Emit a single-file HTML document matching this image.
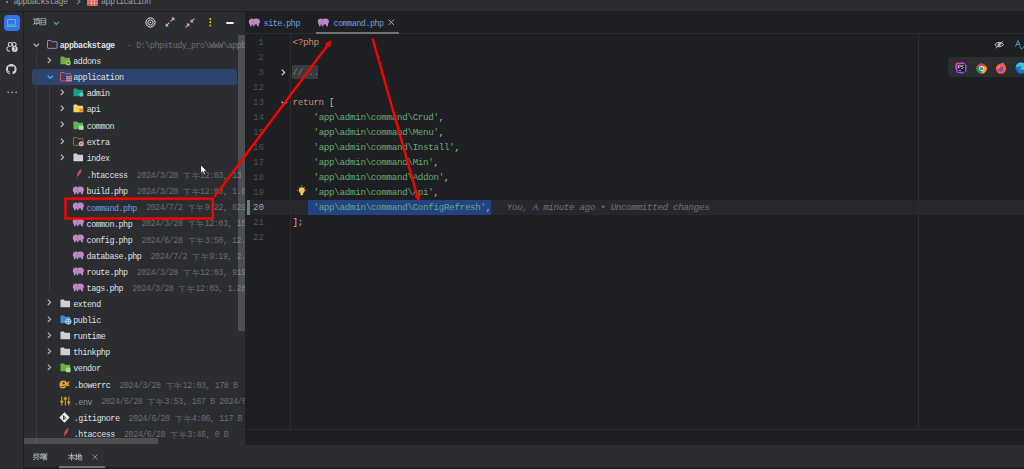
<!DOCTYPE html>
<html><head><meta charset="utf-8"><title>PhpStorm</title>
<style>
*{margin:0;padding:0;box-sizing:border-box}
html,body{width:1024px;height:469px;overflow:hidden;background:#1e1f22}
body{position:relative;font-family:"Liberation Mono",monospace;}
.a{position:absolute}
.t{position:absolute;white-space:pre;font-family:"Liberation Mono",monospace;line-height:1}
svg{overflow:visible}
</style></head><body>

<div class="a" style="left:0;top:0;width:1024px;height:11px;background:#2b2d30"></div>
<div class="a" style="left:0;top:11px;width:1024px;height:1px;background:#1e1f22"></div>
<div class="a" style="left:6px;top:1px;width:2px;height:2px;border-radius:1px;background:#4fc1a8"></div>
<div class="t" style="left:13.5px;top:-1.8px;font-size:8.4px;letter-spacing:-0.52px;color:#9ea2a9">appbackstage</div>
<svg class="a" style="left:76px;top:-1px" width="5" height="6"><path d="M1 0L4 2.5L1 5" fill="none" stroke="#3d8bd4" stroke-width="1.2"/></svg>
<svg class="a" style="left:87px;top:-3px" width="11" height="9"><rect x="0" y="0" width="11" height="9" fill="#e05252"/><path d="M4.5 3V9M7.5 3V9M0 3H11M0 6H11" stroke="#f3b3b3" stroke-width="0.8"/></svg>
<div class="t" style="left:101px;top:-1.8px;font-size:8.4px;letter-spacing:-0.52px;color:#9ea2a9">application</div>
<div class="a" style="left:0;top:12px;width:23px;height:433px;background:#2b2d30"></div>
<div class="a" style="left:23px;top:12px;width:1px;height:433px;background:#1e1f22"></div>
<div class="a" style="left:3.5px;top:15px;width:16.3px;height:16.3px;border-radius:4px;background:#3574f0"></div>
<svg class="a" style="left:5px;top:17px" width="13" height="12"><path d="M2.5 2.5H10.5V8H2.5ZM1.2 9.3H11.8" fill="none" stroke="#53c7a3" stroke-width="1"/></svg>
<svg class="a" style="left:5.6px;top:41.6px" width="12" height="10"><circle cx="4.2" cy="2.4" r="1.9" fill="none" stroke="#d4d6da" stroke-width="1.1"/><circle cx="8.2" cy="2.4" r="1.9" fill="none" stroke="#d4d6da" stroke-width="1.1"/><path d="M2.6 4.4Q0.5 5.2 0.8 7.4Q1.3 9.3 4 9.3" fill="none" stroke="#d4d6da" stroke-width="1.1"/><circle cx="8.7" cy="6.9" r="3" fill="#d4d6da"/><path d="M7.9 6.1Q8.1 5.2 8.9 5.3Q9.7 5.5 9.5 6.3Q9.3 6.9 8.7 7.2V7.8M8.7 8.5V8.9" fill="none" stroke="#2b2d30" stroke-width="0.75"/></svg>
<svg class="a" style="left:6.4px;top:64.4px" width="10.6" height="10.6" viewBox="0 0 16 16"><path fill="#d0d2d6" d="M8 0C3.58 0 0 3.58 0 8c0 3.54 2.29 6.53 5.47 7.59.4.07.55-.17.55-.38 0-.19-.01-.82-.01-1.49-2.01.37-2.53-.49-2.69-.94-.09-.23-.48-.94-.82-1.13-.28-.15-.68-.52-.01-.53.63-.01 1.08.58 1.23.82.72 1.21 1.87.87 2.33.66.07-.52.28-.87.51-1.07-1.78-.2-3.64-.89-3.640-3.95 0-.87.31-1.590.82-2.15-.08-.2-.36-1.02.08-2.12 0 0 .67-.21 2.2.82.64-.18 1.32-.27 2-.27.68 0 1.36.09 2 .27 1.53-1.040 2.2-.82 2.2-.82.44 1.1.16 1.92.08 2.12.51.56.82 1.27.82 2.15 0 3.07-1.870 3.75-3.65 3.95.29.25.54.73.54 1.48 0 1.07-.01 1.93-.01 2.2 0 .21.15.46.55.38A8.013 8.013 0 0016 8c0-4.42-3.58-8-8-8z"/></svg>
<svg class="a" style="left:6.5px;top:91px" width="11" height="3"><circle cx="1.2" cy="1.3" r="0.9" fill="#9a9da3"/><circle cx="5.2" cy="1.3" r="0.9" fill="#9a9da3"/><circle cx="9.2" cy="1.3" r="0.9" fill="#9a9da3"/></svg>
<div class="a" style="left:24px;top:12px;width:222px;height:433px;background:#2b2d30;overflow:hidden" id="proj">
<div class="a" style="left:8.6px;top:6.3px;display:flex;line-height:0"><svg width="7.2" height="7.2" viewBox="0 0 10 10" style="display:inline-block;vertical-align:-1px;"><path d="M0.4 1.6H3.8M2.1 1.6V7.6M0.4 8.6L3.8 7.4M4.4 0.9H9.8M6.8 0.9L6.3 2.4M5 2.6H9.2V7.4H5ZM7.1 3.6V6.6M6 7.6L4.4 9.6M8.2 7.6L9.8 9.6" fill="none" stroke="#c9ccd1" stroke-width="0.85" stroke-linecap="square"/></svg><span style="display:inline-block;width:0.6px"></span><svg width="7.2" height="7.2" viewBox="0 0 10 10" style="display:inline-block;vertical-align:-1px;"><path d="M2 0.8H8V9.4H2ZM2 3.6H8M2 6.5H8" fill="none" stroke="#c9ccd1" stroke-width="0.85" stroke-linecap="square"/></svg></div>
<svg class="a" style="left:29px;top:9.0px" width="7" height="5"><path d="M0.8 0.8L3.3 3.3L5.8 0.8" fill="none" stroke="#3fb6c6" stroke-width="1.2"/></svg>
<svg class="a" style="left:121px;top:5px" width="11" height="11"><circle cx="5.5" cy="5.5" r="4.6" fill="none" stroke="#eceef0" stroke-width="1"/><circle cx="5.5" cy="5.5" r="2.6" fill="none" stroke="#eceef0" stroke-width="0.9"/><path d="M4.8 4.5L6.6 5.5L4.8 6.5Z" fill="#eceef0"/></svg>
<svg class="a" style="left:141.3px;top:5.4px" width="10" height="10"><path d="M5.6 4.4L8.2 1.8M4.4 5.6L1.8 8.2" stroke="#e8a8cb" stroke-width="1.1"/><path d="M9.4 0.6V3.8L6.2 0.6ZM0.6 9.4V6.2L3.8 9.4Z" fill="#e8a8cb"/></svg>
<svg class="a" style="left:161.3px;top:5.6px" width="10" height="10"><path d="M9.4 0.6L6.8 3.2M0.6 9.4L3.2 6.8" stroke="#e8a8cb" stroke-width="1.1"/><path d="M5.6 4.4V1.2L8.8 4.4ZM4.4 5.6V8.8L1.2 5.6Z" fill="#e8a8cb"/></svg>
<svg class="a" style="left:184.5px;top:6.3px" width="3" height="9"><circle cx="1.3" cy="1.1" r="1" fill="#f0c419"/><circle cx="1.3" cy="4.3" r="1" fill="#f0c419"/><circle cx="1.3" cy="7.5" r="1" fill="#f0c419"/></svg>
<div class="a" style="left:201.7px;top:9.5px;width:8px;height:2px;border-radius:1px;background:#f2f3f5"></div>
<div class="a" style="left:8.200000000000003px;top:56.900000000000006px;width:204.60000000000002px;height:16.1px;border-radius:3px;background:#2e436e"></div>
<div class="a" style="left:12.399999999999999px;top:37.5px;width:1px;height:394.5px;background:#393b40"></div>
<div class="a" style="left:25.4px;top:70.5px;width:1px;height:210.5px;background:#393b40"></div>
<svg class="a" style="left:9px;top:30.500000000000004px" width="7" height="5"><path d="M0.7 0.7L3.3 3.4L5.9 0.7" fill="none" stroke="#aeb1b6" stroke-width="1.35"/></svg>
<svg class="a" style="left:22.5px;top:27.700000000000003px" width="11" height="9.3" viewBox="0 0 12 10"><path d="M0.5 1.2Q0.5 0.5 1.2 0.5H4.2L5.4 1.8H10.3Q11 1.8 11 2.5V8.3Q11 9 10.3 9H1.2Q0.5 9 0.5 8.3Z" fill="none" stroke="#b48ce0" stroke-width="1"/></svg>
<div class="t" style="left:35.8px;top:29.700000000000003px;font-size:8.4px;letter-spacing:-0.460px;color:#dfe1e5;font-weight:bold;">appbackstage</div>
<div class="t" style="left:103px;top:29.700000000000003px;font-size:8.4px;letter-spacing:-0.460px;color:#6b6f76;">- D:\phpstudy_pro\WWW\appbackstage</div>
<svg class="a" style="left:22.7px;top:44.68px" width="5" height="7"><path d="M0.8 0.6L3.6 3.3L0.8 6" fill="none" stroke="#b4b7bc" stroke-width="1.2"/></svg>
<svg class="a" style="left:35.5px;top:43.88px" width="11" height="9.3" viewBox="0 0 12 10"><path d="M0.5 1.2Q0.5 0.5 1.2 0.5H4.2L5.4 1.8H10.3Q11 1.8 11 2.5V8.3Q11 9 10.3 9H1.2Q0.5 9 0.5 8.3Z" fill="#73ad3f"/><rect x="6.5" y="5" width="5" height="5" rx="1" fill="#9ed36a"/><rect x="8" y="6.5" width="2" height="2" fill="#3e6b22"/></svg>
<div class="t" style="left:49.3px;top:45.88px;font-size:8.4px;letter-spacing:-0.460px;color:#dfe1e5;">addons</div>
<svg class="a" style="left:22.5px;top:62.86px" width="7" height="5"><path d="M0.7 0.7L3.3 3.4L5.9 0.7" fill="none" stroke="#5a9cf0" stroke-width="1.35"/></svg>
<svg class="a" style="left:35.8px;top:60.46px" width="13" height="10"><path d="M0.5 1.2Q0.5 0.5 1.2 0.5H4.2L5.4 1.8H10.3Q11 1.8 11 2.5V8.3Q11 9 10.3 9H1.2Q0.5 9 0.5 8.3Z" fill="none" stroke="#e05555" stroke-width="1"/><rect x="5.6" y="3.6" width="6.4" height="6" fill="#2e436e"/><path d="M6 4.6H12M6 6.6H12M6 8.6H12M7.2 4V9.6M9.2 4V9.6M11.2 4V9.6" stroke="#f08a8a" stroke-width="0.9"/></svg>
<div class="t" style="left:49.3px;top:62.06px;font-size:8.4px;letter-spacing:-0.460px;color:#dfe1e5;">application</div>
<svg class="a" style="left:36.2px;top:77.04px" width="5" height="7"><path d="M0.8 0.6L3.6 3.3L0.8 6" fill="none" stroke="#b4b7bc" stroke-width="1.2"/></svg>
<svg class="a" style="left:49.2px;top:76.24000000000001px" width="11" height="9.3" viewBox="0 0 12 10"><path d="M0.5 1.2Q0.5 0.5 1.2 0.5H4.2L5.4 1.8H10.3Q11 1.8 11 2.5V8.3Q11 9 10.3 9H1.2Q0.5 9 0.5 8.3Z" fill="#1a9c8e"/><path d="M9 4.2L11.8 7L9 9.8L6.2 7Z" fill="#54d3c0"/></svg>
<div class="t" style="left:62.7px;top:78.24000000000001px;font-size:8.4px;letter-spacing:-0.460px;color:#dfe1e5;">admin</div>
<svg class="a" style="left:36.2px;top:93.22px" width="5" height="7"><path d="M0.8 0.6L3.6 3.3L0.8 6" fill="none" stroke="#b4b7bc" stroke-width="1.2"/></svg>
<svg class="a" style="left:49.2px;top:92.42px" width="11" height="9.3" viewBox="0 0 12 10"><path d="M0.5 1.2Q0.5 0.5 1.2 0.5H4.2L5.4 1.8H10.3Q11 1.8 11 2.5V8.3Q11 9 10.3 9H1.2Q0.5 9 0.5 8.3Z" fill="#f4d35e"/><path d="M7 5L11.5 8.5M11.5 5L7 8.5" stroke="#e07a2e" stroke-width="1.4"/></svg>
<div class="t" style="left:62.7px;top:94.42px;font-size:8.4px;letter-spacing:-0.460px;color:#dfe1e5;">api</div>
<svg class="a" style="left:36.2px;top:109.4px" width="5" height="7"><path d="M0.8 0.6L3.6 3.3L0.8 6" fill="none" stroke="#b4b7bc" stroke-width="1.2"/></svg>
<svg class="a" style="left:49.2px;top:108.60000000000001px" width="11" height="9.3" viewBox="0 0 12 10"><path d="M0.5 1.2Q0.5 0.5 1.2 0.5H4.2L5.4 1.8H10.3Q11 1.8 11 2.5V8.3Q11 9 10.3 9H1.2Q0.5 9 0.5 8.3Z" fill="#5fb15c"/><rect x="6.5" y="5" width="5" height="4.5" fill="#b5e0a8"/></svg>
<div class="t" style="left:62.7px;top:110.60000000000001px;font-size:8.4px;letter-spacing:-0.460px;color:#dfe1e5;">common</div>
<svg class="a" style="left:36.2px;top:125.58px" width="5" height="7"><path d="M0.8 0.6L3.6 3.3L0.8 6" fill="none" stroke="#b4b7bc" stroke-width="1.2"/></svg>
<svg class="a" style="left:49.2px;top:124.78px" width="11" height="9.3" viewBox="0 0 12 10"><path d="M0.5 1.2Q0.5 0.5 1.2 0.5H4.2L5.4 1.8H10.3Q11 1.8 11 2.5V8.3Q11 9 10.3 9H1.2Q0.5 9 0.5 8.3Z" fill="none" stroke="#a0735a" stroke-width="1"/><circle cx="9" cy="7.3" r="2.8" fill="#c9b2a8"/><path d="M7.6 7.3H10.4" stroke="#5a4038" stroke-width="0.8"/></svg>
<div class="t" style="left:62.7px;top:126.78px;font-size:8.4px;letter-spacing:-0.460px;color:#dfe1e5;">extra</div>
<svg class="a" style="left:36.2px;top:141.76px" width="5" height="7"><path d="M0.8 0.6L3.6 3.3L0.8 6" fill="none" stroke="#b4b7bc" stroke-width="1.2"/></svg>
<svg class="a" style="left:49.2px;top:140.95999999999998px" width="11" height="9.3" viewBox="0 0 12 10"><path d="M0.5 1.2Q0.5 0.5 1.2 0.5H4.2L5.4 1.8H10.3Q11 1.8 11 2.5V8.3Q11 9 10.3 9H1.2Q0.5 9 0.5 8.3Z" fill="#ced0d6"/></svg>
<div class="t" style="left:62.7px;top:142.95999999999998px;font-size:8.4px;letter-spacing:-0.460px;color:#dfe1e5;">index</div>
<svg class="a" style="left:51px;top:156.33999999999997px" width="7" height="12"><path d="M6.3 0.4Q7.2 4.4 2.4 9Q0.9 5 6.3 0.4Z" fill="#cf4d63"/><path d="M2.4 9L1.6 11.2M5.6 2L3 7.6" fill="none" stroke="#a83a4e" stroke-width="0.6"/></svg>
<div class="t" style="left:62.599999999999994px;top:159.14px;font-size:8.4px;letter-spacing:-0.460px;color:#dfe1e5;">.htaccess  <span style="color:#6b6f76">2024/3/28 <svg width="7.8" height="7.8" viewBox="0 0 10 10" style="display:inline-block;vertical-align:-1px;margin:0 0.5px 0 0.5px;vertical-align:-1px;position:relative;top:0.8px"><path d="M1 1.8H9M5 1.8V9.6M5.6 4.6L7.8 6.2" fill="none" stroke="#6b6f76" stroke-width="0.8" stroke-linecap="square"/></svg><svg width="7.8" height="7.8" viewBox="0 0 10 10" style="display:inline-block;vertical-align:-1px;margin:0 0.5px 0 0.5px;vertical-align:-1px;position:relative;top:0.8px"><path d="M3.2 0.4L1.6 3.4M2.6 2.8H8.6M0.6 5.8H9.4M5 2.8V9.8" fill="none" stroke="#6b6f76" stroke-width="0.8" stroke-linecap="square"/></svg>12:03, 13 B</span></div>
<svg class="a" style="left:47.900000000000006px;top:173.82px" width="12" height="9"><path d="M1.2 5.6Q0 2.4 2.2 0.9Q4 -0.1 5.6 1.1Q6.8 0.3 8.8 0.5Q11.8 0.9 12 3.6Q12 5 11 5.8V8.3H9.2V6.6H6.4V8.3H4.8V6.6H3.6V8.3H1.9V6.2Z" fill="#bf88c6"/><path d="M5.7 1.2Q4.6 3.4 5.8 5.8" fill="none" stroke="#9a679f" stroke-width="0.55"/></svg>
<div class="t" style="left:62.599999999999994px;top:175.32px;font-size:8.4px;letter-spacing:-0.460px;color:#dfe1e5;">build.php  <span style="color:#6b6f76">2024/3/28 <svg width="7.8" height="7.8" viewBox="0 0 10 10" style="display:inline-block;vertical-align:-1px;margin:0 0.5px 0 0.5px;vertical-align:-1px;position:relative;top:0.8px"><path d="M1 1.8H9M5 1.8V9.6M5.6 4.6L7.8 6.2" fill="none" stroke="#6b6f76" stroke-width="0.8" stroke-linecap="square"/></svg><svg width="7.8" height="7.8" viewBox="0 0 10 10" style="display:inline-block;vertical-align:-1px;margin:0 0.5px 0 0.5px;vertical-align:-1px;position:relative;top:0.8px"><path d="M3.2 0.4L1.6 3.4M2.6 2.8H8.6M0.6 5.8H9.4M5 2.8V9.8" fill="none" stroke="#6b6f76" stroke-width="0.8" stroke-linecap="square"/></svg>12:03, 1.09 kB</span></div>
<svg class="a" style="left:47.900000000000006px;top:190.0px" width="12" height="9"><path d="M1.2 5.6Q0 2.4 2.2 0.9Q4 -0.1 5.6 1.1Q6.8 0.3 8.8 0.5Q11.8 0.9 12 3.6Q12 5 11 5.8V8.3H9.2V6.6H6.4V8.3H4.8V6.6H3.6V8.3H1.9V6.2Z" fill="#bf88c6"/><path d="M5.7 1.2Q4.6 3.4 5.8 5.8" fill="none" stroke="#9a679f" stroke-width="0.55"/></svg>
<div class="t" style="left:62.599999999999994px;top:191.5px;font-size:8.4px;letter-spacing:-0.460px;color:#6e9fe0;">command.php  <span style="color:#6b6f76">2024/7/2 <svg width="7.8" height="7.8" viewBox="0 0 10 10" style="display:inline-block;vertical-align:-1px;margin:0 0.5px 0 0.5px;vertical-align:-1px;position:relative;top:0.8px"><path d="M1 1.8H9M5 1.8V9.6M5.6 4.6L7.8 6.2" fill="none" stroke="#6b6f76" stroke-width="0.8" stroke-linecap="square"/></svg><svg width="7.8" height="7.8" viewBox="0 0 10 10" style="display:inline-block;vertical-align:-1px;margin:0 0.5px 0 0.5px;vertical-align:-1px;position:relative;top:0.8px"><path d="M3.2 0.4L1.6 3.4M2.6 2.8H8.6M0.6 5.8H9.4M5 2.8V9.8" fill="none" stroke="#6b6f76" stroke-width="0.8" stroke-linecap="square"/></svg>9:22, 829 B</span></div>
<svg class="a" style="left:47.900000000000006px;top:206.18px" width="12" height="9"><path d="M1.2 5.6Q0 2.4 2.2 0.9Q4 -0.1 5.6 1.1Q6.8 0.3 8.8 0.5Q11.8 0.9 12 3.6Q12 5 11 5.8V8.3H9.2V6.6H6.4V8.3H4.8V6.6H3.6V8.3H1.9V6.2Z" fill="#bf88c6"/><path d="M5.7 1.2Q4.6 3.4 5.8 5.8" fill="none" stroke="#9a679f" stroke-width="0.55"/></svg>
<div class="t" style="left:62.599999999999994px;top:207.68px;font-size:8.4px;letter-spacing:-0.460px;color:#dfe1e5;">common.php  <span style="color:#6b6f76">2024/3/28 <svg width="7.8" height="7.8" viewBox="0 0 10 10" style="display:inline-block;vertical-align:-1px;margin:0 0.5px 0 0.5px;vertical-align:-1px;position:relative;top:0.8px"><path d="M1 1.8H9M5 1.8V9.6M5.6 4.6L7.8 6.2" fill="none" stroke="#6b6f76" stroke-width="0.8" stroke-linecap="square"/></svg><svg width="7.8" height="7.8" viewBox="0 0 10 10" style="display:inline-block;vertical-align:-1px;margin:0 0.5px 0 0.5px;vertical-align:-1px;position:relative;top:0.8px"><path d="M3.2 0.4L1.6 3.4M2.6 2.8H8.6M0.6 5.8H9.4M5 2.8V9.8" fill="none" stroke="#6b6f76" stroke-width="0.8" stroke-linecap="square"/></svg>12:03, 15.31 kB</span></div>
<svg class="a" style="left:47.900000000000006px;top:222.36px" width="12" height="9"><path d="M1.2 5.6Q0 2.4 2.2 0.9Q4 -0.1 5.6 1.1Q6.8 0.3 8.8 0.5Q11.8 0.9 12 3.6Q12 5 11 5.8V8.3H9.2V6.6H6.4V8.3H4.8V6.6H3.6V8.3H1.9V6.2Z" fill="#bf88c6"/><path d="M5.7 1.2Q4.6 3.4 5.8 5.8" fill="none" stroke="#9a679f" stroke-width="0.55"/></svg>
<div class="t" style="left:62.599999999999994px;top:223.86px;font-size:8.4px;letter-spacing:-0.460px;color:#dfe1e5;">config.php  <span style="color:#6b6f76">2024/6/28 <svg width="7.8" height="7.8" viewBox="0 0 10 10" style="display:inline-block;vertical-align:-1px;margin:0 0.5px 0 0.5px;vertical-align:-1px;position:relative;top:0.8px"><path d="M1 1.8H9M5 1.8V9.6M5.6 4.6L7.8 6.2" fill="none" stroke="#6b6f76" stroke-width="0.8" stroke-linecap="square"/></svg><svg width="7.8" height="7.8" viewBox="0 0 10 10" style="display:inline-block;vertical-align:-1px;margin:0 0.5px 0 0.5px;vertical-align:-1px;position:relative;top:0.8px"><path d="M3.2 0.4L1.6 3.4M2.6 2.8H8.6M0.6 5.8H9.4M5 2.8V9.8" fill="none" stroke="#6b6f76" stroke-width="0.8" stroke-linecap="square"/></svg>3:50, 12.4 kB</span></div>
<svg class="a" style="left:47.900000000000006px;top:238.54000000000002px" width="12" height="9"><path d="M1.2 5.6Q0 2.4 2.2 0.9Q4 -0.1 5.6 1.1Q6.8 0.3 8.8 0.5Q11.8 0.9 12 3.6Q12 5 11 5.8V8.3H9.2V6.6H6.4V8.3H4.8V6.6H3.6V8.3H1.9V6.2Z" fill="#bf88c6"/><path d="M5.7 1.2Q4.6 3.4 5.8 5.8" fill="none" stroke="#9a679f" stroke-width="0.55"/></svg>
<div class="t" style="left:62.599999999999994px;top:240.04000000000002px;font-size:8.4px;letter-spacing:-0.460px;color:#dfe1e5;">database.php  <span style="color:#6b6f76">2024/7/2 <svg width="7.8" height="7.8" viewBox="0 0 10 10" style="display:inline-block;vertical-align:-1px;margin:0 0.5px 0 0.5px;vertical-align:-1px;position:relative;top:0.8px"><path d="M1 1.8H9M5 1.8V9.6M5.6 4.6L7.8 6.2" fill="none" stroke="#6b6f76" stroke-width="0.8" stroke-linecap="square"/></svg><svg width="7.8" height="7.8" viewBox="0 0 10 10" style="display:inline-block;vertical-align:-1px;margin:0 0.5px 0 0.5px;vertical-align:-1px;position:relative;top:0.8px"><path d="M3.2 0.4L1.6 3.4M2.6 2.8H8.6M0.6 5.8H9.4M5 2.8V9.8" fill="none" stroke="#6b6f76" stroke-width="0.8" stroke-linecap="square"/></svg>9:19, 2.1 kB</span></div>
<svg class="a" style="left:47.900000000000006px;top:254.71999999999997px" width="12" height="9"><path d="M1.2 5.6Q0 2.4 2.2 0.9Q4 -0.1 5.6 1.1Q6.8 0.3 8.8 0.5Q11.8 0.9 12 3.6Q12 5 11 5.8V8.3H9.2V6.6H6.4V8.3H4.8V6.6H3.6V8.3H1.9V6.2Z" fill="#bf88c6"/><path d="M5.7 1.2Q4.6 3.4 5.8 5.8" fill="none" stroke="#9a679f" stroke-width="0.55"/></svg>
<div class="t" style="left:62.599999999999994px;top:256.21999999999997px;font-size:8.4px;letter-spacing:-0.460px;color:#dfe1e5;">route.php  <span style="color:#6b6f76">2024/3/28 <svg width="7.8" height="7.8" viewBox="0 0 10 10" style="display:inline-block;vertical-align:-1px;margin:0 0.5px 0 0.5px;vertical-align:-1px;position:relative;top:0.8px"><path d="M1 1.8H9M5 1.8V9.6M5.6 4.6L7.8 6.2" fill="none" stroke="#6b6f76" stroke-width="0.8" stroke-linecap="square"/></svg><svg width="7.8" height="7.8" viewBox="0 0 10 10" style="display:inline-block;vertical-align:-1px;margin:0 0.5px 0 0.5px;vertical-align:-1px;position:relative;top:0.8px"><path d="M3.2 0.4L1.6 3.4M2.6 2.8H8.6M0.6 5.8H9.4M5 2.8V9.8" fill="none" stroke="#6b6f76" stroke-width="0.8" stroke-linecap="square"/></svg>12:03, 919 B</span></div>
<svg class="a" style="left:47.900000000000006px;top:270.9px" width="12" height="9"><path d="M1.2 5.6Q0 2.4 2.2 0.9Q4 -0.1 5.6 1.1Q6.8 0.3 8.8 0.5Q11.8 0.9 12 3.6Q12 5 11 5.8V8.3H9.2V6.6H6.4V8.3H4.8V6.6H3.6V8.3H1.9V6.2Z" fill="#bf88c6"/><path d="M5.7 1.2Q4.6 3.4 5.8 5.8" fill="none" stroke="#9a679f" stroke-width="0.55"/></svg>
<div class="t" style="left:62.599999999999994px;top:272.4px;font-size:8.4px;letter-spacing:-0.460px;color:#dfe1e5;">tags.php  <span style="color:#6b6f76">2024/3/28 <svg width="7.8" height="7.8" viewBox="0 0 10 10" style="display:inline-block;vertical-align:-1px;margin:0 0.5px 0 0.5px;vertical-align:-1px;position:relative;top:0.8px"><path d="M1 1.8H9M5 1.8V9.6M5.6 4.6L7.8 6.2" fill="none" stroke="#6b6f76" stroke-width="0.8" stroke-linecap="square"/></svg><svg width="7.8" height="7.8" viewBox="0 0 10 10" style="display:inline-block;vertical-align:-1px;margin:0 0.5px 0 0.5px;vertical-align:-1px;position:relative;top:0.8px"><path d="M3.2 0.4L1.6 3.4M2.6 2.8H8.6M0.6 5.8H9.4M5 2.8V9.8" fill="none" stroke="#6b6f76" stroke-width="0.8" stroke-linecap="square"/></svg>12:03, 1.28 kB</span></div>
<svg class="a" style="left:22.7px;top:287.38px" width="5" height="7"><path d="M0.8 0.6L3.6 3.3L0.8 6" fill="none" stroke="#b4b7bc" stroke-width="1.2"/></svg>
<svg class="a" style="left:35.5px;top:286.58px" width="11" height="9.3" viewBox="0 0 12 10"><path d="M0.5 1.2Q0.5 0.5 1.2 0.5H4.2L5.4 1.8H10.3Q11 1.8 11 2.5V8.3Q11 9 10.3 9H1.2Q0.5 9 0.5 8.3Z" fill="#ced0d6"/></svg>
<div class="t" style="left:49.3px;top:288.58px;font-size:8.4px;letter-spacing:-0.460px;color:#dfe1e5;">extend</div>
<svg class="a" style="left:22.7px;top:303.56px" width="5" height="7"><path d="M0.8 0.6L3.6 3.3L0.8 6" fill="none" stroke="#b4b7bc" stroke-width="1.2"/></svg>
<svg class="a" style="left:35.5px;top:302.76px" width="11" height="9.3" viewBox="0 0 12 10"><path d="M0.5 1.2Q0.5 0.5 1.2 0.5H4.2L5.4 1.8H10.3Q11 1.8 11 2.5V8.3Q11 9 10.3 9H1.2Q0.5 9 0.5 8.3Z" fill="#3d8fd4"/><circle cx="9.2" cy="7" r="2.9" fill="#3d8fd4" stroke="#cfe6fb" stroke-width="0.9"/><path d="M6.4 7H12M9.2 4.2V9.8" stroke="#cfe6fb" stroke-width="0.7"/></svg>
<div class="t" style="left:49.3px;top:304.76px;font-size:8.4px;letter-spacing:-0.460px;color:#dfe1e5;">public</div>
<svg class="a" style="left:22.7px;top:319.74px" width="5" height="7"><path d="M0.8 0.6L3.6 3.3L0.8 6" fill="none" stroke="#b4b7bc" stroke-width="1.2"/></svg>
<svg class="a" style="left:35.5px;top:318.94px" width="11" height="9.3" viewBox="0 0 12 10"><path d="M0.5 1.2Q0.5 0.5 1.2 0.5H4.2L5.4 1.8H10.3Q11 1.8 11 2.5V8.3Q11 9 10.3 9H1.2Q0.5 9 0.5 8.3Z" fill="#ced0d6"/></svg>
<div class="t" style="left:49.3px;top:320.94px;font-size:8.4px;letter-spacing:-0.460px;color:#dfe1e5;">runtime</div>
<svg class="a" style="left:22.7px;top:335.92px" width="5" height="7"><path d="M0.8 0.6L3.6 3.3L0.8 6" fill="none" stroke="#b4b7bc" stroke-width="1.2"/></svg>
<svg class="a" style="left:35.5px;top:335.12px" width="11" height="9.3" viewBox="0 0 12 10"><path d="M0.5 1.2Q0.5 0.5 1.2 0.5H4.2L5.4 1.8H10.3Q11 1.8 11 2.5V8.3Q11 9 10.3 9H1.2Q0.5 9 0.5 8.3Z" fill="#ced0d6"/></svg>
<div class="t" style="left:49.3px;top:337.12px;font-size:8.4px;letter-spacing:-0.460px;color:#dfe1e5;">thinkphp</div>
<svg class="a" style="left:22.7px;top:352.1px" width="5" height="7"><path d="M0.8 0.6L3.6 3.3L0.8 6" fill="none" stroke="#b4b7bc" stroke-width="1.2"/></svg>
<svg class="a" style="left:35.5px;top:351.3px" width="11" height="9.3" viewBox="0 0 12 10"><path d="M0.5 1.2Q0.5 0.5 1.2 0.5H4.2L5.4 1.8H10.3Q11 1.8 11 2.5V8.3Q11 9 10.3 9H1.2Q0.5 9 0.5 8.3Z" fill="#62b543"/><rect x="6.5" y="5" width="5" height="5" fill="#a6dc8a"/></svg>
<div class="t" style="left:49.3px;top:353.3px;font-size:8.4px;letter-spacing:-0.460px;color:#dfe1e5;">vendor</div>
<svg class="a" style="left:35.4px;top:367.87999999999994px" width="11" height="9"><path d="M4.2 0.6Q7.6 0.4 7.6 3Q9.6 1 10.6 1.4Q10.2 3.4 8.6 4.2Q10.4 4.6 10.8 5.8Q9 6.4 7.6 5.6Q6.6 8.6 3.8 8.6Q0.4 8.4 0.4 4.6Q0.6 0.8 4.2 0.6Z" fill="#eda331"/><circle cx="4.6" cy="3.2" r="1.1" fill="#2b2d30"/><path d="M2 6.4Q4.6 7.2 6.6 5.2" fill="none" stroke="#2b2d30" stroke-width="0.7"/></svg>
<div class="t" style="left:49.8px;top:369.47999999999996px;font-size:8.4px;letter-spacing:-0.460px;color:#dfe1e5;">.bowerrc  <span style="color:#6b6f76">2024/3/28 <svg width="7.8" height="7.8" viewBox="0 0 10 10" style="display:inline-block;vertical-align:-1px;margin:0 0.5px 0 0.5px;vertical-align:-1px;position:relative;top:0.8px"><path d="M1 1.8H9M5 1.8V9.6M5.6 4.6L7.8 6.2" fill="none" stroke="#6b6f76" stroke-width="0.8" stroke-linecap="square"/></svg><svg width="7.8" height="7.8" viewBox="0 0 10 10" style="display:inline-block;vertical-align:-1px;margin:0 0.5px 0 0.5px;vertical-align:-1px;position:relative;top:0.8px"><path d="M3.2 0.4L1.6 3.4M2.6 2.8H8.6M0.6 5.8H9.4M5 2.8V9.8" fill="none" stroke="#6b6f76" stroke-width="0.8" stroke-linecap="square"/></svg>12:03, 178 B</span></div>
<svg class="a" style="left:35.8px;top:383.65999999999997px" width="11" height="10"><path d="M1.8 0.5V9.5M5.3 0.5V9.5M8.8 0.5V9.5" stroke="#e5a331" stroke-width="1"/><path d="M0.3 5.6H3.3M3.8 2.6H6.8M7.3 6.4H10.3" stroke="#e5a331" stroke-width="1.8"/></svg>
<div class="t" style="left:49.8px;top:385.65999999999997px;font-size:8.4px;letter-spacing:-0.460px;color:#8c8f94;">.env  <span style="color:#6b6f76">2024/6/28 <svg width="7.8" height="7.8" viewBox="0 0 10 10" style="display:inline-block;vertical-align:-1px;margin:0 0.5px 0 0.5px;vertical-align:-1px;position:relative;top:0.8px"><path d="M1 1.8H9M5 1.8V9.6M5.6 4.6L7.8 6.2" fill="none" stroke="#6b6f76" stroke-width="0.8" stroke-linecap="square"/></svg><svg width="7.8" height="7.8" viewBox="0 0 10 10" style="display:inline-block;vertical-align:-1px;margin:0 0.5px 0 0.5px;vertical-align:-1px;position:relative;top:0.8px"><path d="M3.2 0.4L1.6 3.4M2.6 2.8H8.6M0.6 5.8H9.4M5 2.8V9.8" fill="none" stroke="#6b6f76" stroke-width="0.8" stroke-linecap="square"/></svg>3:53, 167 B 2024/6/28</span></div>
<svg class="a" style="left:35.2px;top:399.64px" width="11" height="11"><path d="M5.5 0.3L10.7 5.5L5.5 10.7L0.3 5.5Z" fill="#eaeaec"/><path d="M4 3.4L7 6.4M4.6 3.8V8M4.6 5.6L6.6 7.2" stroke="#2b2d30" stroke-width="0.9" fill="none"/></svg>
<div class="t" style="left:49.8px;top:401.84px;font-size:8.4px;letter-spacing:-0.460px;color:#dfe1e5;">.gitignore  <span style="color:#6b6f76">2024/6/28 <svg width="7.8" height="7.8" viewBox="0 0 10 10" style="display:inline-block;vertical-align:-1px;margin:0 0.5px 0 0.5px;vertical-align:-1px;position:relative;top:0.8px"><path d="M1 1.8H9M5 1.8V9.6M5.6 4.6L7.8 6.2" fill="none" stroke="#6b6f76" stroke-width="0.8" stroke-linecap="square"/></svg><svg width="7.8" height="7.8" viewBox="0 0 10 10" style="display:inline-block;vertical-align:-1px;margin:0 0.5px 0 0.5px;vertical-align:-1px;position:relative;top:0.8px"><path d="M3.2 0.4L1.6 3.4M2.6 2.8H8.6M0.6 5.8H9.4M5 2.8V9.8" fill="none" stroke="#6b6f76" stroke-width="0.8" stroke-linecap="square"/></svg>4:06, 117 B</span></div>
<svg class="a" style="left:37.5px;top:415.21999999999997px" width="7" height="12"><path d="M6.3 0.4Q7.2 4.4 2.4 9Q0.9 5 6.3 0.4Z" fill="#cf4d63"/><path d="M2.4 9L1.6 11.2M5.6 2L3 7.6" fill="none" stroke="#a83a4e" stroke-width="0.6"/></svg>
<div class="t" style="left:49.8px;top:418.02px;font-size:8.4px;letter-spacing:-0.460px;color:#dfe1e5;">.htaccess  <span style="color:#6b6f76">2024/6/28 <svg width="7.8" height="7.8" viewBox="0 0 10 10" style="display:inline-block;vertical-align:-1px;margin:0 0.5px 0 0.5px;vertical-align:-1px;position:relative;top:0.8px"><path d="M1 1.8H9M5 1.8V9.6M5.6 4.6L7.8 6.2" fill="none" stroke="#6b6f76" stroke-width="0.8" stroke-linecap="square"/></svg><svg width="7.8" height="7.8" viewBox="0 0 10 10" style="display:inline-block;vertical-align:-1px;margin:0 0.5px 0 0.5px;vertical-align:-1px;position:relative;top:0.8px"><path d="M3.2 0.4L1.6 3.4M2.6 2.8H8.6M0.6 5.8H9.4M5 2.8V9.8" fill="none" stroke="#6b6f76" stroke-width="0.8" stroke-linecap="square"/></svg>3:46, 0 B</span></div>
<div class="a" style="left:214px;top:23px;width:7px;height:296px;background:rgba(255,255,255,0.165)"></div>
<div class="a" style="left:0px;top:425.6px;width:134.4px;height:6.5px;background:rgba(255,255,255,0.165)"></div>
</div>
<div class="a" style="left:245px;top:12px;width:779px;height:433px;background:#1e1f22;overflow:hidden">
<div class="a" style="left:0;top:21px;width:779px;height:1px;background:#2b2d30"></div>
<div class="a" style="left:70.5px;top:20px;width:83.5px;height:2px;background:#6f737a"></div>
<svg class="a" style="left:2.5999999999999943px;top:5.899999999999999px" width="12" height="9"><path d="M1.2 5.6Q0 2.4 2.2 0.9Q4 -0.1 5.6 1.1Q6.8 0.3 8.8 0.5Q11.8 0.9 12 3.6Q12 5 11 5.8V8.3H9.2V6.6H6.4V8.3H4.8V6.6H3.6V8.3H1.9V6.2Z" fill="#bf88c6"/><path d="M5.7 1.2Q4.6 3.4 5.8 5.8" fill="none" stroke="#9a679f" stroke-width="0.55"/></svg>
<div class="t" style="left:18.600000000000023px;top:7.899999999999999px;font-size:8.4px;letter-spacing:-0.48px;color:#6e9fe0">site.php</div>
<svg class="a" style="left:72.39999999999998px;top:5.899999999999999px" width="12" height="9"><path d="M1.2 5.6Q0 2.4 2.2 0.9Q4 -0.1 5.6 1.1Q6.8 0.3 8.8 0.5Q11.8 0.9 12 3.6Q12 5 11 5.8V8.3H9.2V6.6H6.4V8.3H4.8V6.6H3.6V8.3H1.9V6.2Z" fill="#bf88c6"/><path d="M5.7 1.2Q4.6 3.4 5.8 5.8" fill="none" stroke="#9a679f" stroke-width="0.55"/></svg>
<div class="t" style="left:88.60000000000002px;top:7.899999999999999px;font-size:8.4px;letter-spacing:-0.48px;color:#6e9fe0">command.php</div>
<svg class="a" style="left:143px;top:7.199999999999998px" width="7" height="7"><path d="M0.6 0.6L6 6M6 0.6L0.6 6" stroke="#a8abb0" stroke-width="1"/></svg>
<div class="a" style="left:0;top:188px;width:779px;height:15px;background:#26282e"></div>
<div class="a" style="left:45px;top:22px;width:1px;height:395px;background:#2b2d30"></div>
<div class="a" style="left:673px;top:22px;width:1px;height:395px;background:#2b2d30"></div>
<div class="a" style="left:0;top:417px;width:779px;height:1px;background:#2b2d30"></div>
<div class="a" style="left:2.1999999999999886px;top:188px;width:2.8px;height:15px;background:#549159"></div>
<div class="t" style="left:13.169999999999977px;top:26.299999999999997px;font-size:9.2px;color:#4b5059;width:6.23px">1</div>
<div class="t" style="left:13.169999999999977px;top:41.3px;font-size:9.2px;color:#4b5059;width:6.23px">2</div>
<div class="t" style="left:13.169999999999977px;top:56.3px;font-size:9.2px;color:#4b5059;width:6.23px">3</div>
<div class="t" style="left:7.939999999999976px;top:71.30000000000001px;font-size:9.2px;color:#4b5059;width:11.46px">12</div>
<div class="t" style="left:7.939999999999976px;top:86.30000000000001px;font-size:9.2px;color:#4b5059;width:11.46px">13</div>
<div class="t" style="left:7.939999999999976px;top:101.30000000000001px;font-size:9.2px;color:#4b5059;width:11.46px">14</div>
<div class="t" style="left:7.939999999999976px;top:116.30000000000001px;font-size:9.2px;color:#4b5059;width:11.46px">15</div>
<div class="t" style="left:7.939999999999976px;top:131.3px;font-size:9.2px;color:#4b5059;width:11.46px">16</div>
<div class="t" style="left:7.939999999999976px;top:146.3px;font-size:9.2px;color:#4b5059;width:11.46px">17</div>
<div class="t" style="left:7.939999999999976px;top:161.3px;font-size:9.2px;color:#4b5059;width:11.46px">18</div>
<div class="t" style="left:7.939999999999976px;top:176.3px;font-size:9.2px;color:#4b5059;width:11.46px">19</div>
<div class="t" style="left:7.939999999999976px;top:191.3px;font-size:9.2px;color:#a1a3ab;width:11.46px">20</div>
<div class="t" style="left:7.939999999999976px;top:206.3px;font-size:9.2px;color:#4b5059;width:11.46px">21</div>
<div class="t" style="left:7.939999999999976px;top:221.3px;font-size:9.2px;color:#4b5059;width:11.46px">22</div>
<svg class="a" style="left:36px;top:57px" width="5" height="7"><path d="M0.8 0.6L3.6 3.4L0.8 6.2" fill="none" stroke="#dfe1e5" stroke-width="1.2"/></svg>
<svg class="a" style="left:35.5px;top:88.5px" width="7" height="5"><path d="M0.7 0.7L3.3 3.4L5.9 0.7" fill="none" stroke="#c8cacf" stroke-width="1.2"/></svg>
<div class="a" style="left:47.19999999999999px;top:52.5px;width:25.80000000000001px;height:14.8px;border-radius:1px;background:#393b40"></div>
<div class="a" style="left:62.89999999999998px;top:188px;width:183.0px;height:15px;background:#214283"></div>
<svg class="a" style="left:51px;top:172.5px" width="12" height="12"><circle cx="5.8" cy="5.2" r="2.9" fill="#f2c94c"/><rect x="4.5" y="7.6" width="2.6" height="2.6" fill="#f2c94c"/><path d="M5.8 0.3V1.4M1.2 5.2H2.2M9.4 5.2H10.4M2.6 2L3.3 2.7M9 2L8.3 2.7" stroke="#f2c94c" stroke-width="0.9"/></svg>
<div class="t" style="left:47.5px;top:26.299999999999997px;font-size:9.2px;letter-spacing:-0.28999999999999915px"><span style="color:#cf8e6d">&lt;?php</span></div>
<div class="t" style="left:47.5px;top:56.3px;font-size:9.2px;letter-spacing:-0.28999999999999915px"><span style="color:#7a7e85">// ..</span></div>
<div class="t" style="left:47.5px;top:86.30000000000001px;font-size:9.2px;letter-spacing:-0.28999999999999915px"><span style="color:#cf8e6d">return</span> <span style="color:#d5b778">[</span></div>
<div class="t" style="left:47.5px;top:101.30000000000001px;font-size:9.2px;letter-spacing:-0.28999999999999915px">    <span style="color:#6aab73">'app\admin\command\Crud'</span><span style="color:#bcbec4">,</span></div>
<div class="t" style="left:47.5px;top:116.30000000000001px;font-size:9.2px;letter-spacing:-0.28999999999999915px">    <span style="color:#6aab73">'app\admin\command\Menu'</span><span style="color:#bcbec4">,</span></div>
<div class="t" style="left:47.5px;top:131.3px;font-size:9.2px;letter-spacing:-0.28999999999999915px">    <span style="color:#6aab73">'app\admin\command\Install'</span><span style="color:#bcbec4">,</span></div>
<div class="t" style="left:47.5px;top:146.3px;font-size:9.2px;letter-spacing:-0.28999999999999915px">    <span style="color:#6aab73">'app\admin\command\Min'</span><span style="color:#bcbec4">,</span></div>
<div class="t" style="left:47.5px;top:161.3px;font-size:9.2px;letter-spacing:-0.28999999999999915px">    <span style="color:#6aab73">'app\admin\command\Addon'</span><span style="color:#bcbec4">,</span></div>
<div class="t" style="left:47.5px;top:176.3px;font-size:9.2px;letter-spacing:-0.28999999999999915px">    <span style="color:#6aab73">'app\admin\command\Api'</span><span style="color:#bcbec4">,</span></div>
<div class="t" style="left:47.5px;top:191.3px;font-size:9.2px;letter-spacing:-0.28999999999999915px">    <span style="color:#6aab73">'app\admin\command\ConfigRefresh'</span><span style="color:#bcbec4">,</span></div>
<div class="t" style="left:47.5px;top:206.3px;font-size:9.2px;letter-spacing:-0.28999999999999915px"><span style="color:#d5b778">]</span><span style="color:#bcbec4">;</span></div>
<div class="t" style="left:261.8px;top:191.3px;font-size:9.2px;font-style:italic;color:#6f737a;letter-spacing:-0.3199999999999994px">You, A minute ago • Uncommitted changes</div>
<svg class="a" style="left:749px;top:28.5px" width="11" height="8"><path d="M0.8 3.6Q5 -1 9.6 3.6Q5 8.2 0.8 3.6Z" fill="none" stroke="#c2c4c8" stroke-width="1"/><circle cx="5.2" cy="3.6" r="1.5" fill="#c2c4c8"/><path d="M1.6 7L8.8 0.4" stroke="#c2c4c8" stroke-width="1"/></svg>
<svg class="a" style="left:769.8px;top:27.5px" width="12" height="10"><path d="M0.5 6.5L3 0.6L5.5 6.5M1.4 4.5H4.6M4.4 6.8L6.6 9.2L11 4" fill="none" stroke="#39a9c2" stroke-width="1"/></svg>
<div class="a" style="left:703.2px;top:45.1px;width:90px;height:20.4px;border-radius:4px;background:#2b2d30"></div>
<svg class="a" style="left:709.8px;top:49.8px" width="12" height="12"><defs><linearGradient id="psg" x1="0" y1="0" x2="1" y2="1"><stop offset="0" stop-color="#ff318c"/><stop offset="0.5" stop-color="#b345f1"/><stop offset="1" stop-color="#765af8"/></linearGradient></defs><path d="M0.6 0.8L8.8 0.2L11.6 3.6L11.2 9.4L6.6 11.8L1.6 10.6L0.2 5Z" fill="url(#psg)"/><rect x="2.6" y="2.4" width="7.2" height="7.2" fill="#000"/><path d="M3.6 6.4V3.4H4.9Q5.8 3.4 5.8 4.3Q5.8 5.2 4.9 5.2H3.6M8.4 3.5H7.2Q6.5 3.5 6.5 4.2Q6.5 4.8 7.2 4.8Q8.4 4.8 8.4 5.6Q8.4 6.4 7.4 6.4H6.4M3.6 8.3H6.2" fill="none" stroke="#fff" stroke-width="0.75"/></svg>
<svg class="a" style="left:730.7px;top:50.8px" width="11" height="11" viewBox="0 0 20 20"><circle cx="10" cy="10" r="9.4" fill="#db4437"/><path d="M10 10L1.9 14.7A9.4 9.4 0 0 0 10.5 19.4Z" fill="#0f9d58"/><path d="M10 10L10.5 19.4A9.4 9.4 0 0 0 18.8 6.5H10Z" fill="#f4b400"/><path d="M10 10L1.9 14.7A9.4 9.4 0 0 1 2.2 5.2Z" fill="#0f9d58"/><circle cx="10" cy="10" r="4.4" fill="#fff"/><circle cx="10" cy="10" r="3.4" fill="#4285f4"/></svg>
<svg class="a" style="left:749.7px;top:49.5px" width="12" height="12" viewBox="0 0 20 20"><circle cx="10" cy="11" r="8.6" fill="#ff5a36"/><path d="M10 2.4Q17.6 2.8 18.6 10Q18 6 14 4.6Q15 2.4 13 0.6Q14 3 10 2.4Z" fill="#ffbd2e"/><circle cx="9.4" cy="11.4" r="4.4" fill="#7b3fe4"/><path d="M4 9Q6 6 10 7Q8 9 6.5 12Z" fill="#ff8a2a"/></svg>
<svg class="a" style="left:769.8px;top:50.3px" width="12" height="12" viewBox="0 0 20 20"><circle cx="10" cy="10" r="9.2" fill="#1b74d0"/><path d="M1.2 9Q2.4 1 10 0.8Q17.6 1 19 8.6Q19.2 12 16 12.6H8.6Q8.4 9.6 11.6 8.6Q9 6 5.4 7.4Q2.6 8.4 1.2 9Z" fill="#35c1f1"/><path d="M12 5Q17 5.2 19 9Q19 12.6 16 12.6H12Q13.6 10.8 12 9Q11.4 6.6 12 5Z" fill="#4fd66b"/><path d="M4 13Q4.6 17.6 10 18.6Q6.4 19.4 3 16Q0.6 13 1.2 9Q2.4 12 4 13Z" fill="#0c59a4"/></svg>
</div>
<div class="a" style="left:24px;top:444.5px;width:1000px;height:22.5px;background:#2b2d30"></div>
<div class="a" style="left:24px;top:467.5px;width:1000px;height:1.5px;background:#222326"></div>
<div class="a" style="left:0;top:444px;width:23px;height:25px;background:#2b2d30"></div>
<div class="a" style="left:23px;top:444px;width:1px;height:25px;background:#1e1f22"></div>
<div class="a" style="left:32.8px;top:452.9px;display:flex;line-height:0"><svg width="7.2" height="7.2" viewBox="0 0 10 10" style="display:inline-block;vertical-align:-1px;"><path d="M2.4 0.4L0.8 3.4L3 3.2M3 2L0.6 6.4L3.8 5.8M0.6 9.2L3.8 8M6 0.4L4.4 3M5.4 1.6H9L4.6 6.4M6 3.6L9.8 6.4M6.4 7.2L7.6 7.8M6 8.8L7.4 9.6" fill="none" stroke="#c9ccd1" stroke-width="0.85" stroke-linecap="square"/></svg><span style="display:inline-block;width:0.4px"></span><svg width="7.2" height="7.2" viewBox="0 0 10 10" style="display:inline-block;vertical-align:-1px;"><path d="M2.2 0.4V1.8M0.6 2H3.8M1 3.2L1.6 6.6M3.4 3.2L2.8 6.6M0.4 7.4H3.8M4.6 0.6V2.8H9.4V0.6M7 0.4V2.8M4.4 4H9.8M6.6 4L6 5.4M4.8 5.6H9.2V9.8M4.8 5.6V9.8M6.2 5.6V9M7.8 5.6V9" fill="none" stroke="#c9ccd1" stroke-width="0.85" stroke-linecap="square"/></svg></div>
<div class="a" style="left:67.8px;top:452.9px;display:flex;line-height:0"><svg width="7.2" height="7.2" viewBox="0 0 10 10" style="display:inline-block;vertical-align:-1px;"><path d="M0.6 3.2H9.4M5 0.4V9.8M4.8 3.4L0.6 8.2M5.2 3.4L9.4 8.2M3 7.4H7" fill="none" stroke="#dfe1e5" stroke-width="0.85" stroke-linecap="square"/></svg><span style="display:inline-block;width:0.4px"></span><svg width="7.2" height="7.2" viewBox="0 0 10 10" style="display:inline-block;vertical-align:-1px;"><path d="M0.4 4H3.6M2 1.4V8.4M0.4 9L3.8 7.6M4.6 4.6L9.4 3.4V7.2L8.6 7.8M5 1.8V8.8Q5 9.6 6 9.6H9.8M7 0.8V7.6" fill="none" stroke="#dfe1e5" stroke-width="0.85" stroke-linecap="square"/></svg></div>
<svg class="a" style="left:92px;top:453.5px" width="6" height="6"><path d="M0.5 0.5L5.5 5.5M5.5 0.5L0.5 5.5" stroke="#8c8f94" stroke-width="0.9"/></svg>
<div class="a" style="left:59.2px;top:465.5px;width:46px;height:2px;background:#6f737a"></div>
<svg class="a" style="left:0;top:0" width="1024" height="469"><rect x="65.5" y="198.6" width="147.3" height="19.9" fill="none" stroke="#ff0000" stroke-width="2.4"/><path d="M214.5 196.8L327.6 45.3" stroke="#ff0000" stroke-width="2.4"/><path d="M331 40.7L329.5 47.1L325.3 43.9Z" fill="#ff0000" stroke="#ff0000" stroke-width="0.8" stroke-linejoin="round"/><path d="M372.6 38.5L417.1 195.3" stroke="#ff0000" stroke-width="2.4"/><path d="M418.7 200.8L419.6 194.3L414.6 195.7Z" fill="#ff0000" stroke="#ff0000" stroke-width="0.8" stroke-linejoin="round"/></svg>
<svg class="a" style="left:199.6px;top:163.6px" width="9" height="12"><path d="M0.6 0.6V9.6L2.7 7.7L4.1 10.9L5.6 10.3L4.3 7.2H7.2Z" fill="#fff" stroke="#000" stroke-width="0.7" stroke-linejoin="round"/></svg>
</body></html>
